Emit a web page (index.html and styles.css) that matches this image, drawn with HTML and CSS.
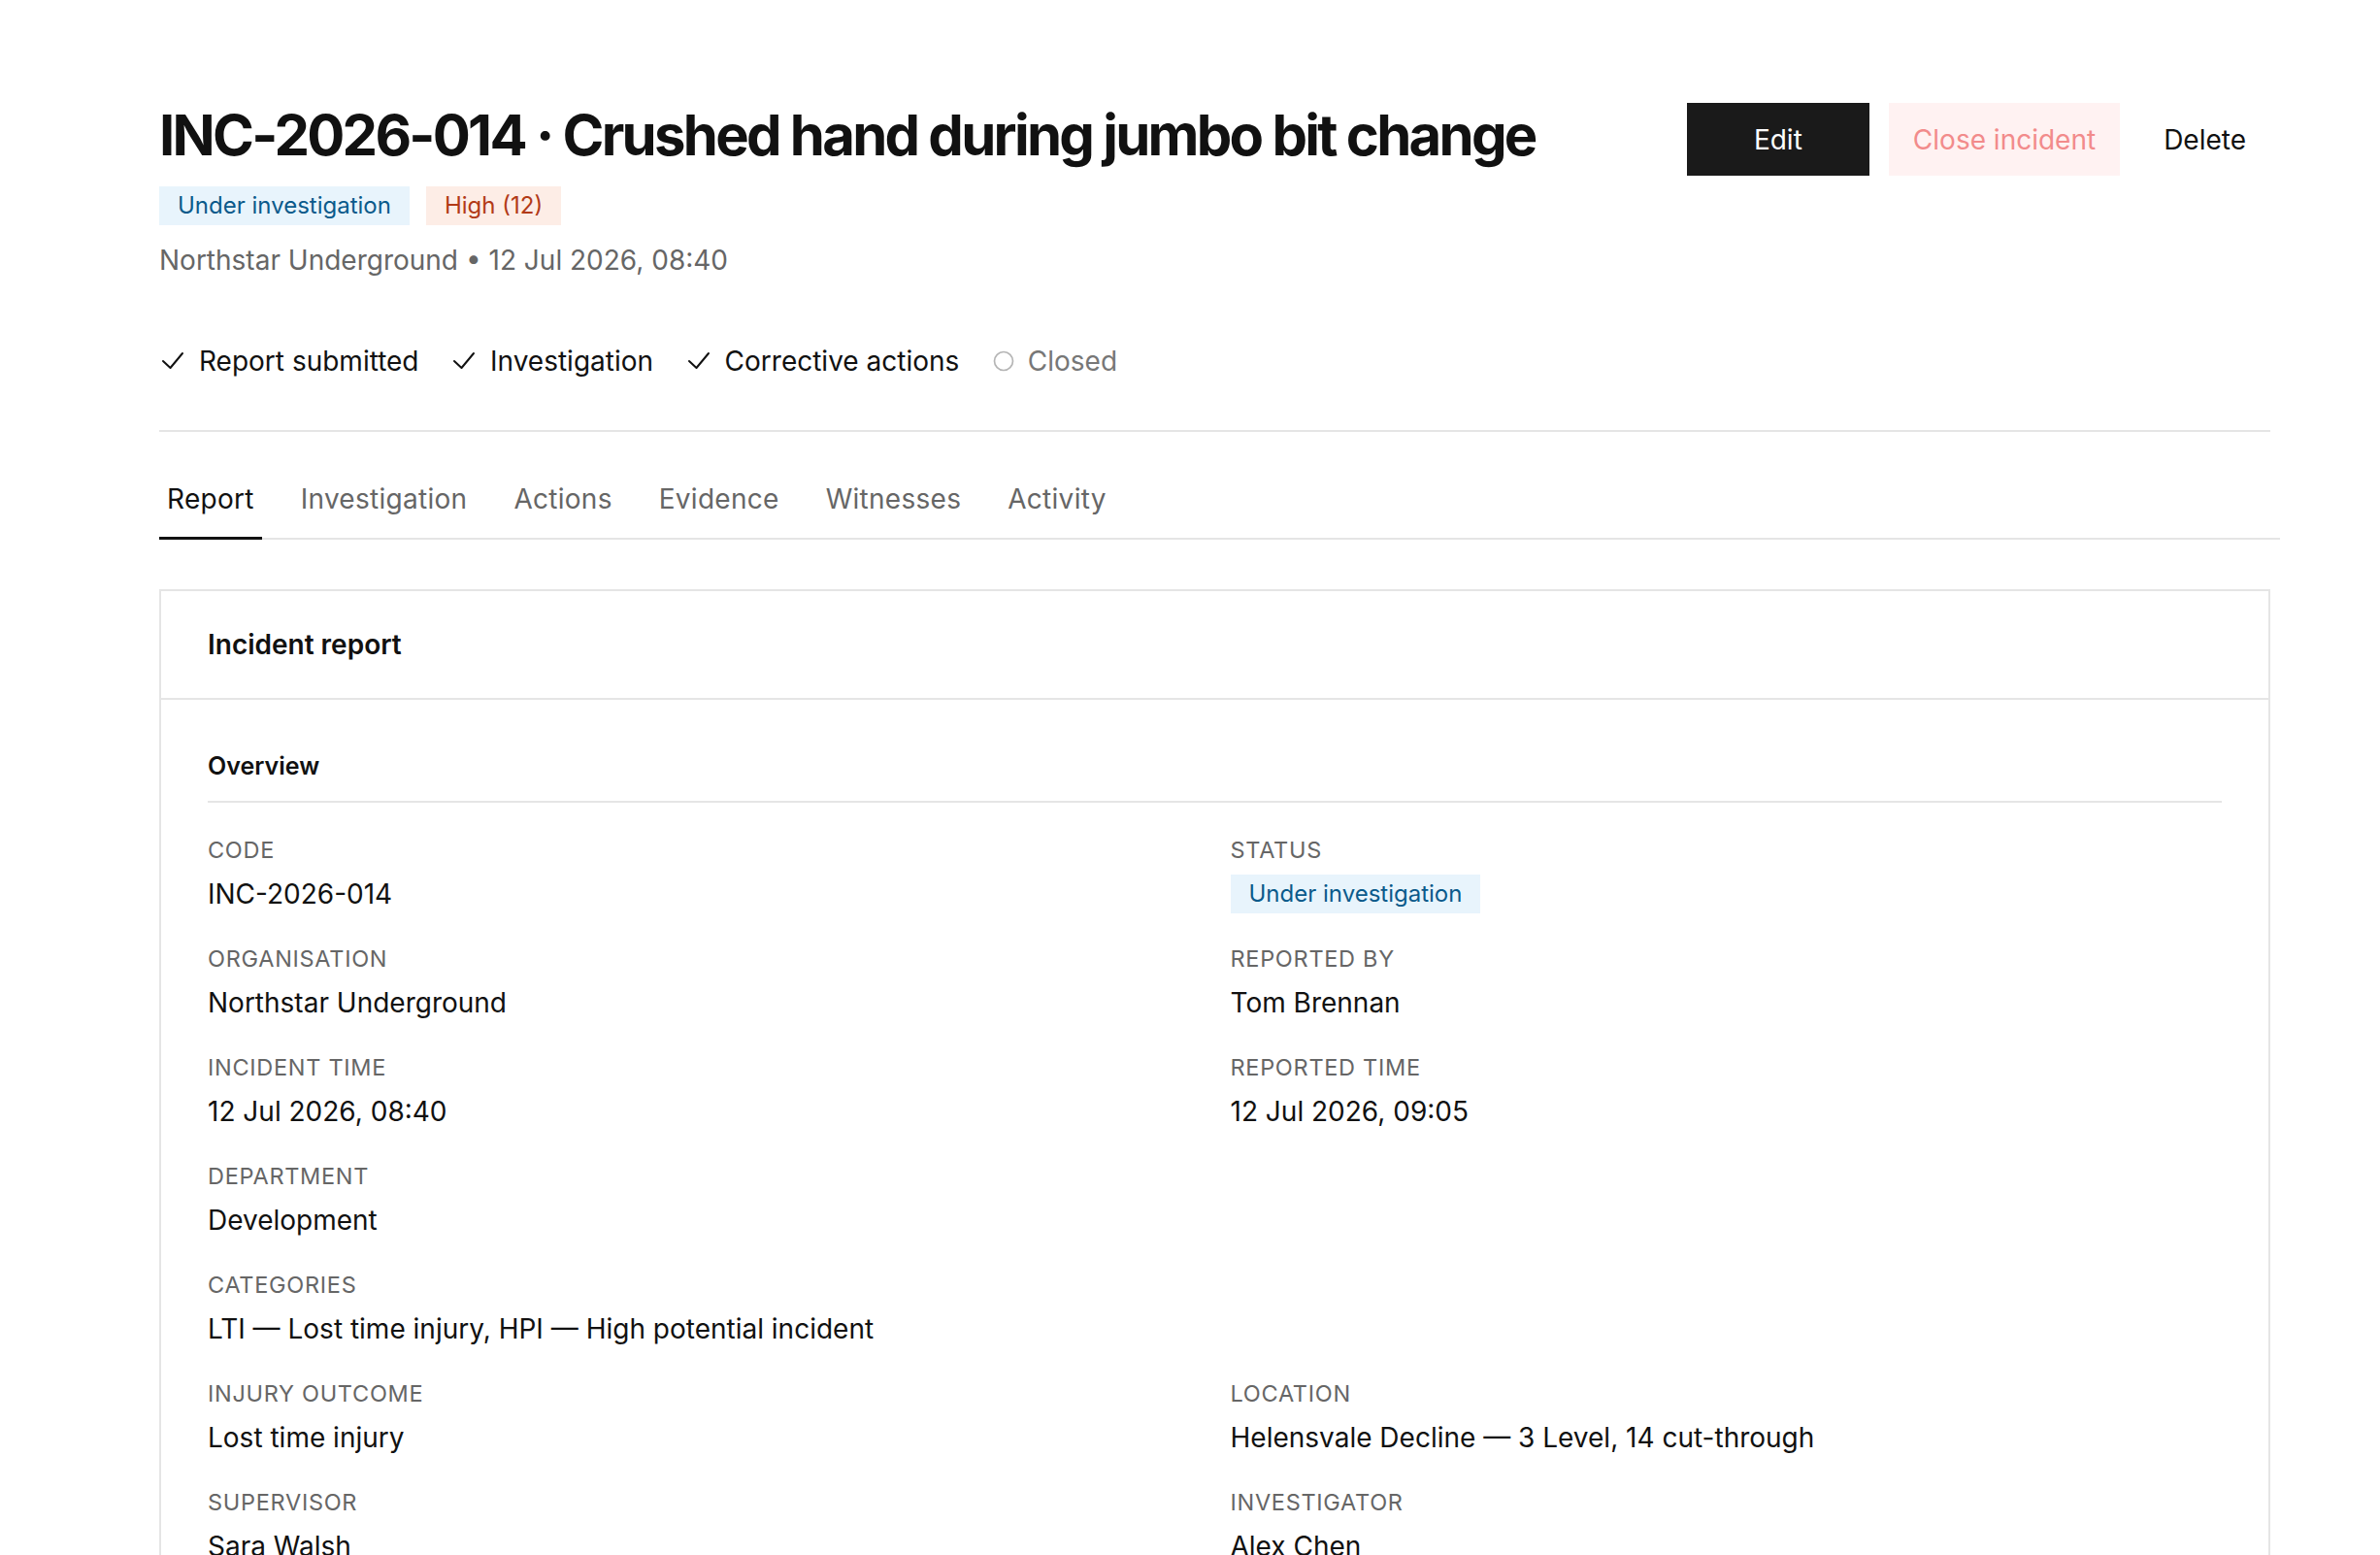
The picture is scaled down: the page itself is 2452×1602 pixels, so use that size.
FILE: index.html
```html
<!DOCTYPE html>
<html lang="en">
<head>
<meta charset="utf-8">
<title>INC-2026-014 · Crushed hand during jumbo bit change</title>
<link rel="stylesheet" href="styles.css">
</head>
<body>
<div class="page">
  <header class="header">
    <div class="header-main">
      <h1 class="title">INC-2026-014 · Crushed hand during jumbo bit change</h1>
      <div class="badges">
        <span class="badge badge-blue">Under investigation</span>
        <span class="badge badge-red">High (12)</span>
      </div>
      <div class="meta">Northstar Underground • 12 Jul 2026, 08:40</div>
    </div>
    <div class="actions">
      <button class="btn btn-primary">Edit</button>
      <button class="btn btn-soft-danger">Close incident</button>
      <button class="btn btn-plain">Delete</button>
    </div>
  </header>

  <ol class="steps">
    <li class="step done">
      <svg class="step-icon check" viewBox="0 0 26 24" width="26" height="24"><path d="M4 12 L11.5 19 L24 4" fill="none" stroke="#111" stroke-width="2" stroke-linecap="round" stroke-linejoin="round"/></svg>
      <span>Report submitted</span>
    </li>
    <li class="step done">
      <svg class="step-icon check" viewBox="0 0 26 24" width="26" height="24"><path d="M4 12 L11.5 19 L24 4" fill="none" stroke="#111" stroke-width="2" stroke-linecap="round" stroke-linejoin="round"/></svg>
      <span>Investigation</span>
    </li>
    <li class="step done">
      <svg class="step-icon check" viewBox="0 0 26 24" width="26" height="24"><path d="M4 12 L11.5 19 L24 4" fill="none" stroke="#111" stroke-width="2" stroke-linecap="round" stroke-linejoin="round"/></svg>
      <span>Corrective actions</span>
    </li>
    <li class="step pending">
      <svg class="step-icon ring" viewBox="0 0 24 24" width="24" height="24"><circle cx="13" cy="12" r="9.5" fill="none" stroke="#b5b5b5" stroke-width="1.7"/></svg>
      <span>Closed</span>
    </li>
  </ol>

  <div class="divider"></div>

  <nav class="tabs">
    <a class="tab active">Report</a>
    <a class="tab">Investigation</a>
    <a class="tab">Actions</a>
    <a class="tab">Evidence</a>
    <a class="tab">Witnesses</a>
    <a class="tab">Activity</a>
  </nav>

  <section class="card">
    <div class="card-header">Incident report</div>
    <div class="card-body">
      <h2 class="section-title">Overview</h2>
      <div class="grid">
        <div class="field"><div class="label">Code</div><div class="value">INC-2026-014</div></div>
        <div class="field"><div class="label">Status</div><div class="value"><span class="badge badge-blue">Under investigation</span></div></div>

        <div class="field"><div class="label">Organisation</div><div class="value">Northstar Underground</div></div>
        <div class="field"><div class="label">Reported by</div><div class="value">Tom Brennan</div></div>

        <div class="field"><div class="label">Incident time</div><div class="value">12 Jul 2026, 08:40</div></div>
        <div class="field"><div class="label">Reported time</div><div class="value">12 Jul 2026, 09:05</div></div>

        <div class="field"><div class="label">Department</div><div class="value">Development</div></div>
        <div class="field empty"></div>

        <div class="field"><div class="label">Categories</div><div class="value">LTI — Lost time injury, HPI — High potential incident</div></div>
        <div class="field empty"></div>

        <div class="field"><div class="label">Injury outcome</div><div class="value">Lost time injury</div></div>
        <div class="field"><div class="label">Location</div><div class="value">Helensvale Decline — 3 Level, 14 cut-through</div></div>

        <div class="field"><div class="label">Supervisor</div><div class="value">Sara Walsh</div></div>
        <div class="field"><div class="label">Investigator</div><div class="value">Alex Chen</div></div>
      </div>
    </div>
  </section>
</div>
</body>
</html>
```

FILE: styles.css
```css
html, body {
  margin: 0;
  padding: 0;
  background: #ffffff;
}

body {
  font-family: Inter, "Noto Sans", "Liberation Sans", sans-serif;
  color: #111111;
}

.page {
  padding: 104px 113px 0 164px;
}

.header {
  display: flex;
  justify-content: space-between;
  align-items: flex-start;
}

.title {
  margin: 0;
  font-size: 58px;
  line-height: 70px;
  font-weight: 700;
  letter-spacing: -0.047em;
  color: #111111;
}

.actions {
  display: flex;
  gap: 20px;
  margin-top: 2px;
}

.btn {
  height: 75px;
  padding: 0 25px;
  border: 0;
  font-family: inherit;
  font-size: 28px;
  line-height: 77px;
  font-weight: 400;
  cursor: pointer;
}

.btn-primary {
  background: #1a1a1a;
  color: #ffffff;
  min-width: 188px;
}

.btn-soft-danger {
  background: #fff2f2;
  color: #f28b8b;
}

.btn-plain {
  background: transparent;
  color: #111111;
}

.badges {
  display: flex;
  gap: 17px;
  margin-top: 18px;
}

.badge {
  display: inline-block;
  height: 40px;
  padding: 0 19px;
  font-size: 24px;
  line-height: 40px;
}

.badge-blue {
  background: #e8f4fc;
  color: #0b5a8b;
}

.badge-red {
  background: #fdede6;
  color: #b23a17;
}

.meta {
  margin-top: 16px;
  font-size: 28px;
  line-height: 40px;
  color: #666666;
}

.steps {
  display: flex;
  gap: 32.5px;
  margin: 64px 0 0;
  padding: 0;
  list-style: none;
  font-size: 28px;
  line-height: 40px;
}

.step {
  display: flex;
  align-items: center;
}

.step.pending {
  color: #777777;
}

.step-icon {
  display: block;
  flex: none;
}

.step-icon.check {
  margin-right: 15px;
}

.step-icon.ring {
  margin-right: 14px;
}

.divider {
  height: 2px;
  background: #e5e5e5;
  margin-top: 51px;
}

.tabs {
  display: flex;
  gap: 32px;
  margin: 49px -10px 0 0;
  border-bottom: 2px solid #e5e5e5;
}

.tab {
  position: relative;
  padding: 0 8px 20px;
  font-size: 28px;
  line-height: 40px;
  letter-spacing: 0.01em;
  color: #666666;
  cursor: pointer;
}

.tab.active {
  color: #111111;
}

.tab.active::after {
  content: "";
  position: absolute;
  left: 0;
  right: 0;
  bottom: -2px;
  height: 3px;
  background: #111111;
}

.card {
  margin-top: 51px;
  border: 2px solid #e5e5e5;
}

.card-header {
  padding: 35px 48px 35px;
  border-bottom: 2px solid #e5e5e5;
  font-size: 28px;
  line-height: 40px;
  font-weight: 600;
  letter-spacing: 0;
}

.card-body {
  padding: 50px 48px 60px;
}

.section-title {
  margin: 0;
  padding-bottom: 18px;
  border-bottom: 2px solid #e5e5e5;
  font-size: 25px;
  line-height: 36px;
  font-weight: 600;
  letter-spacing: 0;
}

.grid {
  display: grid;
  grid-template-columns: 1fr 1fr;
  column-gap: 32px;
  row-gap: 31px;
  margin-top: 33px;
}

.label {
  font-size: 23.5px;
  line-height: 32px;
  letter-spacing: 0.03em;
  text-transform: uppercase;
  color: #666666;
}

.value {
  margin-top: 9px;
  font-size: 28px;
  line-height: 40px;
}

.value .badge {
  vertical-align: top;
}
```
